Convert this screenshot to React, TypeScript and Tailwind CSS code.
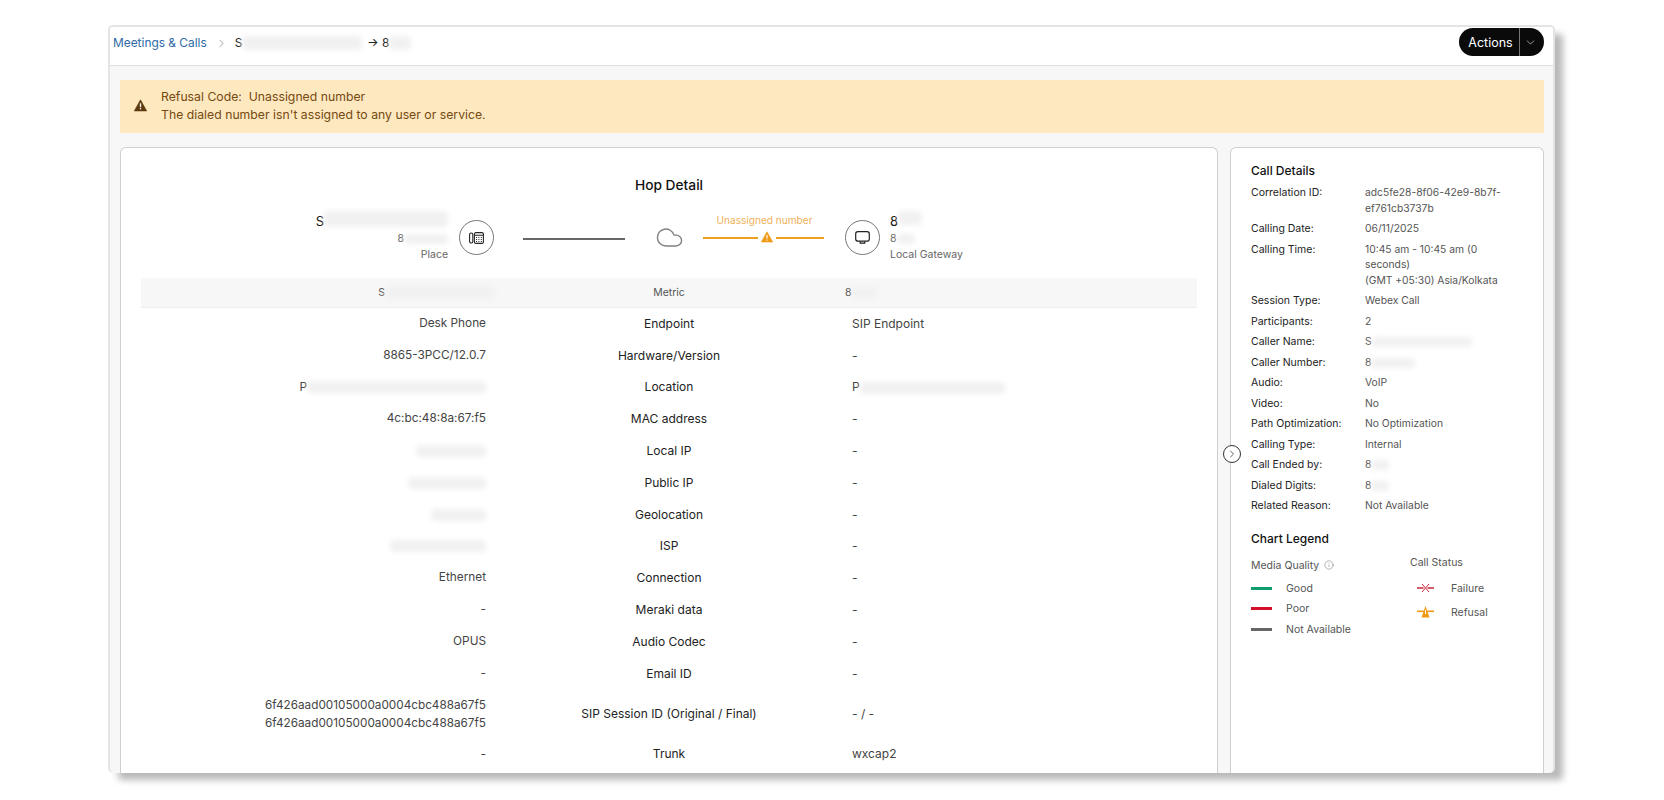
import React from 'react';
import { ChevronDown, ChevronRight, Cloud, Info } from 'lucide-react';

type Cell = { text?: string; blur?: number };

const Smear: React.FC<{ w: number; h?: number }> = ({ w, h = 12 }) => (
  <span className="inline-block align-middle rounded-sm bg-[#f1f1f1] blur-[2.5px]" style={{ width: w, height: h }} />
);

const WarnIcon: React.FC<{ color: string; size?: number }> = ({ color, size = 12 }) => (
  <svg width={size} height={size} viewBox="0 0 12 12">
    <path d="M6 .8 11.7 11H.3z" fill={color} stroke={color} strokeLinejoin="round" strokeWidth="0.6" />
    <path d="M6 4v3.6" stroke="#fff" strokeWidth="1.2" />
    <circle cx="6" cy="9.1" r="0.7" fill="#fff" />
  </svg>
);

const rows: { left: Cell; metric: string; right: Cell }[] = [
  { left: { text: 'Desk Phone' }, metric: 'Endpoint', right: { text: 'SIP Endpoint' } },
  { left: { text: '8865-3PCC/12.0.7' }, metric: 'Hardware/Version', right: { text: '-' } },
  { left: { text: 'P', blur: 179 }, metric: 'Location', right: { text: 'P', blur: 145 } },
  { left: { text: '4c:bc:48:8a:67:f5' }, metric: 'MAC address', right: { text: '-' } },
  { left: { blur: 70 }, metric: 'Local IP', right: { text: '-' } },
  { left: { blur: 78 }, metric: 'Public IP', right: { text: '-' } },
  { left: { blur: 55 }, metric: 'Geolocation', right: { text: '-' } },
  { left: { blur: 96 }, metric: 'ISP', right: { text: '-' } },
  { left: { text: 'Ethernet' }, metric: 'Connection', right: { text: '-' } },
  { left: { text: '-' }, metric: 'Meraki data', right: { text: '-' } },
  { left: { text: 'OPUS' }, metric: 'Audio Codec', right: { text: '-' } },
  { left: { text: '-' }, metric: 'Email ID', right: { text: '-' } },
];

const details: { label: string; value?: React.ReactNode }[] = [
  { label: 'Correlation ID:', value: <>adc5fe28-8f06-42e9-8b7f-<br />ef761cb3737b</> },
  { label: 'Calling Date:', value: '06/11/2025' },
  { label: 'Calling Time:', value: <>10:45 am - 10:45 am (0<br />seconds)<br />(GMT +05:30) Asia/Kolkata</> },
  { label: 'Session Type:', value: 'Webex Call' },
  { label: 'Participants:', value: '2' },
  { label: 'Caller Name:', value: <>S<Smear w={100} h={10} /></> },
  { label: 'Caller Number:', value: <>8<Smear w={44} h={10} /></> },
  { label: 'Audio:', value: 'VoIP' },
  { label: 'Video:', value: 'No' },
  { label: 'Path Optimization:', value: 'No Optimization' },
  { label: 'Calling Type:', value: 'Internal' },
  { label: 'Call Ended by:', value: <>8<Smear w={18} h={10} /></> },
  { label: 'Dialed Digits:', value: <>8<Smear w={18} h={10} /></> },
  { label: 'Related Reason:', value: 'Not Available' },
];

const CellValue: React.FC<{ cell: Cell }> = ({ cell }) => (
  <>
    {cell.text}
    {cell.blur ? <Smear w={cell.blur} /> : null}
  </>
);

export default function App() {
  return (
    <div className="w-[1664px] h-[800px] overflow-hidden bg-white pt-[25px] pl-[108px] font-['Inter',sans-serif]">
      <div className="relative w-[1447px] h-[748px] overflow-hidden rounded-[5px] border-2 border-[#e4e4e4] border-b-0 bg-[#f7f7f7] shadow-[9px_8px_7px_-1px_rgba(0,0,0,0.28)]">
        <header className="h-[39px] flex items-start justify-between bg-white border-b border-[#dedede] pl-[3px] pr-[9px] pt-[1px]">
          <div className="flex h-[28px] items-center pt-[2px] text-[11.9px]">
            <span className="text-[#2e6aa6]">Meetings &amp; Calls</span>
            <ChevronRight className="ml-[8px] mr-[7px] text-[#8a8a8a]" size={13} strokeWidth={1.4} />
            <span className="text-[#222]">S</span>
            <Smear w={120} h={14} />
            <span className="ml-[5px] text-[#222]">→ 8</span>
            <Smear w={22} h={14} />
          </div>
          <div className="flex h-[28px] w-[85px] items-center rounded-full bg-[#0a0a0a] text-white">
            <span className="w-[61px] pl-[3px] pt-[1px] text-center text-[12.5px] border-r border-[#777] leading-[27px]">Actions</span>
            <ChevronDown className="ml-[4px] text-[#ccc]" size={13} strokeWidth={1.4} />
          </div>
        </header>

        <div className="pl-[10px] pr-[9px] pt-[14px]">
          <div className="flex h-[53px] w-[1424px] items-center bg-[#fde8c0] pl-[14px] pb-[2px] text-[12.25px] leading-[18px] text-[#764a10]">
            <WarnIcon color="#5e3a10" size={13} />
            <div className="ml-[14px]">
              <div>Refusal Code:&nbsp; Unassigned number</div>
              <div>The dialed number isn't assigned to any user or service.</div>
            </div>
          </div>

          <div className="mt-[14px] flex gap-[12px]">
            <section className="h-[640px] w-[1098px] rounded-t-[6px] border border-b-0 border-[#cfcfcf] bg-white px-[20px] pt-[27px]">
              <h2 className="text-center text-[13.75px] font-medium leading-[20px] text-[#111]">Hop Detail</h2>

              <div className="relative mt-[15px] flex h-[68px] items-start">
                <div className="w-[307px] text-right">
                  <div className="flex justify-end pt-[1px] text-[13px] leading-[20px] text-[#111]">S<Smear w={124} h={16} /></div>
                  <div className="-mt-[1.5px] text-[10.5px] leading-[17px] text-[#666]">8<Smear w={44} h={10} /></div>
                  <div className="text-[10.5px] leading-[15px] text-[#666]">Place</div>
                </div>
                <div className="ml-[11px] mt-[10px] flex h-[35px] w-[35px] shrink-0 items-center justify-center rounded-full border border-[#777]">
                  <svg width="15" height="12" viewBox="0 0 15 12" fill="none" stroke="#222" strokeWidth="1.1">
                    <rect x="0.6" y="1" width="3.2" height="10" rx="1.6" />
                    <rect x="5.4" y="0.6" width="9" height="10.8" rx="1.5" />
                    <path d="M5.4 3.2h9" />
                    <path d="M7 5.5h1M9.4 5.5h1M11.8 5.5h1M7 7.5h1M9.4 7.5h1M11.8 7.5h1M7 9.5h1M9.4 9.5h1M11.8 9.5h1" strokeWidth="1" />
                  </svg>
                </div>
                <div className="ml-[29px] mt-[28px] h-[2px] w-[102px] bg-[#666]" />
                <Cloud className="ml-[29.5px] mt-[12.5px] text-[#808080]" size={29} strokeWidth={1.15} />
                <div className="relative ml-[19.5px] w-[121px]">
                  <div className="absolute top-[2px] left-0 w-full pl-[2px] text-center text-[10.1px] leading-[16px] text-[#eeb158]">Unassigned number</div>
                  <div className="mt-[23px] flex items-center">
                    <div className="h-[2px] w-[56px] bg-[#ef9f1f]" />
                    <span className="mx-[3px] -mt-[2px] block"><WarnIcon color="#ef9a16" /></span>
                    <div className="h-[2px] w-[48px] bg-[#ef9f1f]" />
                  </div>
                </div>
                <div className="ml-[21px] mt-[10px] flex h-[35px] w-[35px] shrink-0 items-center justify-center rounded-full border border-[#777]">
                  <svg width="15" height="13" viewBox="0 0 15 13" fill="none" stroke="#222" strokeWidth="1.2">
                    <rect x="0.7" y="0.7" width="13.6" height="9.4" rx="2.2" />
                    <path d="M5.2 10.2v2h4.6v-2" />
                  </svg>
                </div>
                <div className="ml-[10px]">
                  <div className="flex pt-[1px] text-[13px] leading-[20px] text-[#111]">8<Smear w={24} h={14} /></div>
                  <div className="-mt-[1.5px] text-[10.5px] leading-[17px] text-[#666]">8<Smear w={18} h={10} /></div>
                  <div className="text-[10.5px] leading-[15px] text-[#666]">Local Gateway</div>
                </div>
              </div>

              <div className="grid h-[30px] w-[1056px] grid-cols-[354px_348px_354px] items-center border-b border-[#eee] bg-[#f7f7f7] text-[10.5px] text-[#555]">
                <div className="text-right">S<Smear w={110} h={13} /></div>
                <div className="text-center">Metric</div>
                <div className="pl-[2px]">8<Smear w={24} h={12} /></div>
              </div>

              {rows.map((r) => (
                <div key={r.metric} className="grid h-[31.8px] w-[1056px] grid-cols-[345px_366px_345px] items-center text-[12px]">
                  <div className="text-right text-[11.8px] text-[#444]"><CellValue cell={r.left} /></div>
                  <div className="text-center text-[#222]">{r.metric}</div>
                  <div className="text-[#444]"><CellValue cell={r.right} /></div>
                </div>
              ))}
              <div className="grid h-[48px] w-[1056px] grid-cols-[345px_366px_345px] items-center text-[12px] leading-[18px]">
                <div className="text-right text-[11.75px] text-[#444]">6f426aad00105000a0004cbc488a67f5<br />6f426aad00105000a0004cbc488a67f5</div>
                <div className="text-center text-[#222]">SIP Session ID (Original / Final)</div>
                <div className="text-[#444]">- / -</div>
              </div>
              <div className="grid h-[32px] w-[1056px] grid-cols-[345px_366px_345px] items-center text-[12px]">
                <div className="text-right text-[#444]">-</div>
                <div className="text-center text-[#222]">Trunk</div>
                <div className="text-[#444]">wxcap2</div>
              </div>
            </section>

            <aside className="h-[640px] w-[314px] rounded-t-[6px] border border-b-0 border-[#cfcfcf] bg-white pl-[20px] pt-[15px]">
              <h3 className="text-[12px] font-medium leading-[16px] text-[#111]">Call Details</h3>
              <div className="mt-[6px] flex flex-col gap-[5.03px] text-[10.5px] leading-[15.5px]">
                {details.map((d) => (
                  <div key={d.label} className="flex">
                    <div className="w-[114px] shrink-0 text-[#222]">{d.label}</div>
                    <div className="text-[10.3px] text-[#555]">{d.value}</div>
                  </div>
                ))}
              </div>

              <h3 className="mt-[17px] text-[12px] font-medium leading-[16px] text-[#111]">Chart Legend</h3>
              <div className="flex text-[10.5px] leading-[15px] text-[#555]">
                <div className="w-[159px] pt-[11px]">
                  <div className="flex items-center gap-[5px]">Media Quality <Info size={10} strokeWidth={1.3} className="text-[#777]" /></div>
                  <div className="mt-[8px] flex flex-col gap-[5.5px]">
                    <div className="flex items-center"><span className="h-[3px] w-[21px] bg-[#0f9d6e]" /><span className="ml-[14px]">Good</span></div>
                    <div className="flex items-center"><span className="h-[3px] w-[21px] bg-[#d4102a]" /><span className="ml-[14px]">Poor</span></div>
                    <div className="flex items-center"><span className="h-[3px] w-[21px] bg-[#666]" /><span className="ml-[14px]">Not Available</span></div>
                  </div>
                </div>
                <div className="pt-[8px]">
                  <div>Call Status</div>
                  <div className="mt-[11px] flex items-center pl-[7px]">
                    <svg width="17" height="10" viewBox="0 0 17 10" fill="none" stroke="#c8283a" strokeWidth="1">
                      <path d="M0 5h6.5M10.5 5H17" strokeWidth="1.6" />
                      <path d="M5 1l7 8M12 1l-7 8" />
                    </svg>
                    <span className="ml-[17px]">Failure</span>
                  </div>
                  <div className="mt-[9px] flex items-center pl-[7px]">
                    <svg width="17" height="12" viewBox="0 0 17 12" fill="#ef9a16">
                      <path d="M0 4.5h17v1.6H0z" />
                      <path d="M8.5 0 12.5 11.5H4.5z" />
                      <path d="M8.5 4v4" stroke="#fff" strokeWidth="1" />
                    </svg>
                    <span className="ml-[17px]">Refusal</span>
                  </div>
                </div>
              </div>
            </aside>
          </div>
        </div>

        <div className="absolute left-[1113px] top-[418px] flex h-[18px] w-[18px] items-center justify-center rounded-full border border-[#333] bg-white">
          <ChevronRight size={12} strokeWidth={1.4} className="text-[#222]" />
        </div>
      </div>
    </div>
  );
}
